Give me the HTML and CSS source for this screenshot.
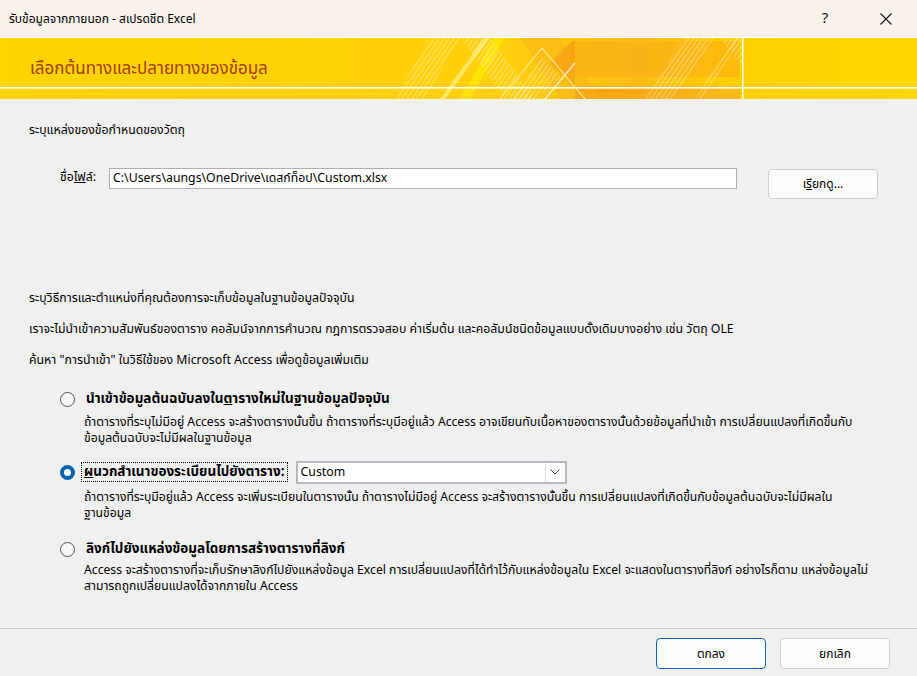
FILE: index.html
```html
<!DOCTYPE html>
<html lang="th">
<head>
<meta charset="utf-8">
<title>รับข้อมูลจากภายนอก - สเปรดชีต Excel</title>
<link rel="stylesheet" href="styles.css">
</head>
<body>
<div class="window">
  <div class="titlebar">
    <span class="title">รับข้อมูลจากภายนอก - สเปรดชีต Excel</span>
    <span class="tb-btn help">?</span>
    <span class="tb-btn close">
      <svg width="12" height="12" viewBox="0 0 12 12"><path d="M0.5 0.5 L11.5 11.5 M11.5 0.5 L0.5 11.5" stroke="#1a1a1a" stroke-width="1.1" fill="none"/></svg>
    </span>
  </div>

  <div class="banner">
    <svg class="banner-art" width="917" height="62" viewBox="0 0 917 62" preserveAspectRatio="none">
      <defs>
        <linearGradient id="bg" x1="0" y1="0" x2="1" y2="0">
          <stop offset="0" stop-color="#ffd400"/>
          <stop offset="0.55" stop-color="#ffcf0c"/>
          <stop offset="0.7" stop-color="#fcbd14"/>
          <stop offset="0.8" stop-color="#ffd000"/>
          <stop offset="1" stop-color="#ffd700"/>
        </linearGradient>
        <linearGradient id="org" x1="0" y1="0" x2="1" y2="0">
          <stop offset="0" stop-color="#f5980f"/>
          <stop offset="1" stop-color="#fbb51e"/>
        </linearGradient>
        <pattern id="stripe" width="4" height="4" patternUnits="userSpaceOnUse" patternTransform="rotate(35)">
          <rect width="1.3" height="4" fill="#ffffff" fill-opacity="0.35"/>
        </pattern>
      </defs>
      <rect width="917" height="62" fill="url(#bg)"/>
      <polygon points="550,26 572,4 575,4 575,49 740,49 740,62 575,62 575,50" fill="url(#org)" opacity="0.8"/>
      <polygon points="575,4 740,4 740,40 575,40" fill="#f9ac18" opacity="0.55"/>
      <polygon points="520,0 560,0 600,62 560,62" fill="#f8b21c" opacity="0.45"/>
      <polygon points="395,62 430,0 460,0 425,62" fill="url(#stripe)"/>
      <polygon points="460,62 495,0 505,0 470,62" fill="#fff200" opacity="0.55"/>
      <polygon points="440,62 485,0 490,0 445,62" fill="#fff6a0" opacity="0.6"/>
      <polygon points="460,0 490,0 535,62 505,62" fill="url(#stripe)"/>
      <polygon points="642,62 685,0 715,0 672,62" fill="url(#stripe)"/>
      <polygon points="695,62 735,0 742,0 702,62" fill="url(#stripe)"/>
      <polygon points="720,0 742,0 742,30" fill="url(#stripe)"/>
      <polyline points="500,62 542,11 585,62" fill="none" stroke="#ffe680" stroke-width="1.2"/>
      <polyline points="545,62 575,26" fill="none" stroke="#ffffff" stroke-width="1.2" opacity="0.8"/>
      <polygon points="510,62 542,20 560,40 535,62" fill="url(#stripe)"/>
      <rect x="0" y="0" width="917" height="1" fill="#ffffff"/>
      <rect x="0" y="50" width="917" height="1.6" fill="#ffffff"/>
      <rect x="742" y="0" width="1.5" height="62" fill="#ffffff"/>
    </svg>
    <div class="banner-title">เลือกต้นทางและปลายทางของข้อมูล</div>
  </div>

  <div class="content">
    <p class="lead">ระบุแหล่งของข้อกำหนดของวัตถุ</p>

    <div class="file-row">
      <label class="file-label">ชื่อ<u>ไฟ</u>ล์:</label>
      <div class="textbox">C:\Users\aungs\OneDrive\เดสก์ท็อป\Custom.xlsx</div>
      <button class="btn browse">เ<u>รี</u>ยกดู...</button>
    </div>

    <p class="para first">ระบุวิธีการและตำแหน่งที่คุณต้องการจะเก็บข้อมูลในฐานข้อมูลปัจจุบัน</p>
    <p class="para">เราจะไม่นำเข้าความสัมพันธ์ของตาราง คอลัมน์จากการคำนวณ กฎการตรวจสอบ ค่าเริ่มต้น และคอลัมน์ชนิดข้อมูลแบบดั้งเดิมบางอย่าง เช่น วัตถุ OLE</p>
    <p class="para">ค้นหา "การนำเข้า" ในวิธีใช้ของ Microsoft Access เพื่อดูข้อมูลเพิ่มเติม</p>

    <div class="options">
      <div class="option opt1">
        <div class="opt-head">
          <span class="radio"></span>
          <span class="opt-label">นำเข้าข้อมูลต้นฉบับลงใน<u>ต</u>ารางใหม่ในฐานข้อมูลปัจจุบัน</span>
        </div>
        <div class="opt-desc">ถ้าตารางที่ระบุไม่มีอยู่ Access จะสร้างตารางนั้นขึ้น ถ้าตารางที่ระบุมีอยู่แล้ว Access อาจเขียนทับเนื้อหาของตารางนั้นด้วยข้อมูลที่นำเข้า การเปลี่ยนแปลงที่เกิดขึ้นกับ<br>ข้อมูลต้นฉบับจะไม่มีผลในฐานข้อมูล</div>
      </div>

      <div class="option opt2">
        <div class="opt-head">
          <span class="radio checked"></span>
          <span class="opt-label focus"><u>ผ</u>นวกสำเนาของระเบียนไปยังตาราง:</span>
          <div class="combo">
            <span class="combo-text">Custom</span>
            <span class="combo-btn">
              <svg width="10" height="6" viewBox="0 0 10 6"><path d="M0.5 0.5 L5 5 L9.5 0.5" fill="none" stroke="#444" stroke-width="1"/></svg>
            </span>
          </div>
        </div>
        <div class="opt-desc">ถ้าตารางที่ระบุมีอยู่แล้ว Access จะเพิ่มระเบียนในตารางนั้น ถ้าตารางไม่มีอยู่ Access จะสร้างตารางนั้นขึ้น การเปลี่ยนแปลงที่เกิดขึ้นกับข้อมูลต้นฉบับจะไม่มีผลใน<br>ฐานข้อมูล</div>
      </div>

      <div class="option opt3">
        <div class="opt-head">
          <span class="radio"></span>
          <span class="opt-label">ลิงก์ไปยังแหล่งข้อมูลโดยการสร้างตารางที่ลิงก์</span>
        </div>
        <div class="opt-desc">Access จะสร้างตารางที่จะเก็บรักษาลิงก์ไปยังแหล่งข้อมูล Excel การเปลี่ยนแปลงที่ได้ทำไว้กับแหล่งข้อมูลใน Excel จะแสดงในตารางที่ลิงก์ อย่างไรก็ตาม แหล่งข้อมูลไม่<br>สามารถถูกเปลี่ยนแปลงได้จากภายใน Access</div>
      </div>
    </div>
  </div>

  <div class="footer">
    <button class="btn footer-btn ok">ตกลง</button>
    <button class="btn footer-btn">ยกเลิก</button>
  </div>
</div>
</body>
</html>
```

FILE: styles.css
```css
* { box-sizing: border-box; }
html, body { margin: 0; padding: 0; }
body {
  width: 917px;
  height: 676px;
  overflow: hidden;
  background: #f0f0f0;
  font-family: "Leelawadee UI", Tahoma, "Noto Sans Thai", "Noto Sans", sans-serif;
  font-size: 12px;
  color: #000;
}
.window {
  width: 917px;
  height: 676px;
  display: flex;
  flex-direction: column;
  background: #f0f0f0;
}
.titlebar {
  height: 37px;
  flex: none;
  background: #f9f1ec;
  display: flex;
  align-items: center;
  padding-left: 9px;
}
.title { font-size: 12px; flex: 1; }
.tb-btn {
  width: 60px;
  display: flex;
  justify-content: center;
  align-items: center;
  font-size: 15px;
  color: #1a1a1a;
}
.close { width: 62px; }

.banner {
  position: relative;
  height: 62px;
  flex: none;
}
.banner-art { position: absolute; left: 0; top: 0; }
.banner-title {
  position: relative;
  height: 50px;
  display: flex;
  align-items: center;
  padding-left: 30px;
  padding-top: 13px;
  font-size: 17px;
  color: #a33b0b;
}

.content {
  flex: 1;
  padding-left: 29px;
}
.lead { margin: 24px 0 0; line-height: 16px; font-size: 12.3px; }
.file-row {
  display: flex;
  align-items: flex-start;
  margin-top: 29px;
  margin-left: 31px;
}
.file-label { width: 49px; margin-top: 2px; line-height: 16px; font-size: 12.3px; }
.textbox {
  width: 628px;
  height: 21px;
  background: #fff;
  border: 1px solid #adadb4;
  padding: 1px 3px 0;
  font-size: 12.3px;
  line-height: 17px;
}
.btn {
  font-family: inherit;
  font-size: 12px;
  color: #000;
  background: #fdfdfd;
  border: 1px solid #d0d0d0;
  border-radius: 4px;
}
.browse {
  width: 110px;
  height: 30px;
  margin-left: 31px;
  margin-top: 1px;
}
.para { margin: 0; line-height: 16px; font-size: 12.3px; }
.para.first { margin-top: 92px; }
.para + .para { margin-top: 15px; }

.options { margin-top: 19px; margin-left: 31px; }
.opt-head { display: flex; align-items: center; height: 22px; }
.radio {
  width: 15px;
  height: 15px;
  border: 1px solid #555;
  border-radius: 50%;
  background: #f7f7f7;
  flex: none;
}
.radio.checked {
  border: 4px solid #0063b1;
  background: #fff;
}
.opt-label {
  font-weight: bold;
  font-size: 13.5px;
  margin-left: 9px;
  line-height: 18px;
  padding: 0 2px;
}
.opt-label.focus { outline: 1px dotted #000; margin-left: 7px; }
.opt-desc {
  margin-left: 24px;
  line-height: 16px;
  font-size: 12.2px;
}
.opt1 .opt-desc { margin-top: 4px; }
.opt2 { margin-top: 15px; }
.opt2 .opt-desc { margin-top: 6px; }
.opt3 { margin-top: 17px; }
.opt3 .opt-desc { margin-top: 2px; }
.combo {
  margin-left: 9px;
  width: 271px;
  height: 23px;
  background: #fff;
  border: 2px solid #b5b9c2;
  display: flex;
  align-items: center;
}
.combo-text { flex: 1; padding-left: 3px; font-size: 12.3px; }
.combo-btn {
  width: 20px;
  height: 19px;
  border-left: 1px solid #e0e0e0;
  display: flex;
  align-items: center;
  justify-content: center;
}

.footer {
  height: 48px;
  flex: none;
  border-top: 1px solid #c8c8c8;
  display: flex;
  justify-content: flex-end;
  align-items: flex-start;
  padding-top: 9px;
  padding-right: 27px;
  gap: 14px;
}
.footer-btn { width: 110px; height: 31px; }
.footer-btn.ok { border: 1px solid #0067c0; }
```
